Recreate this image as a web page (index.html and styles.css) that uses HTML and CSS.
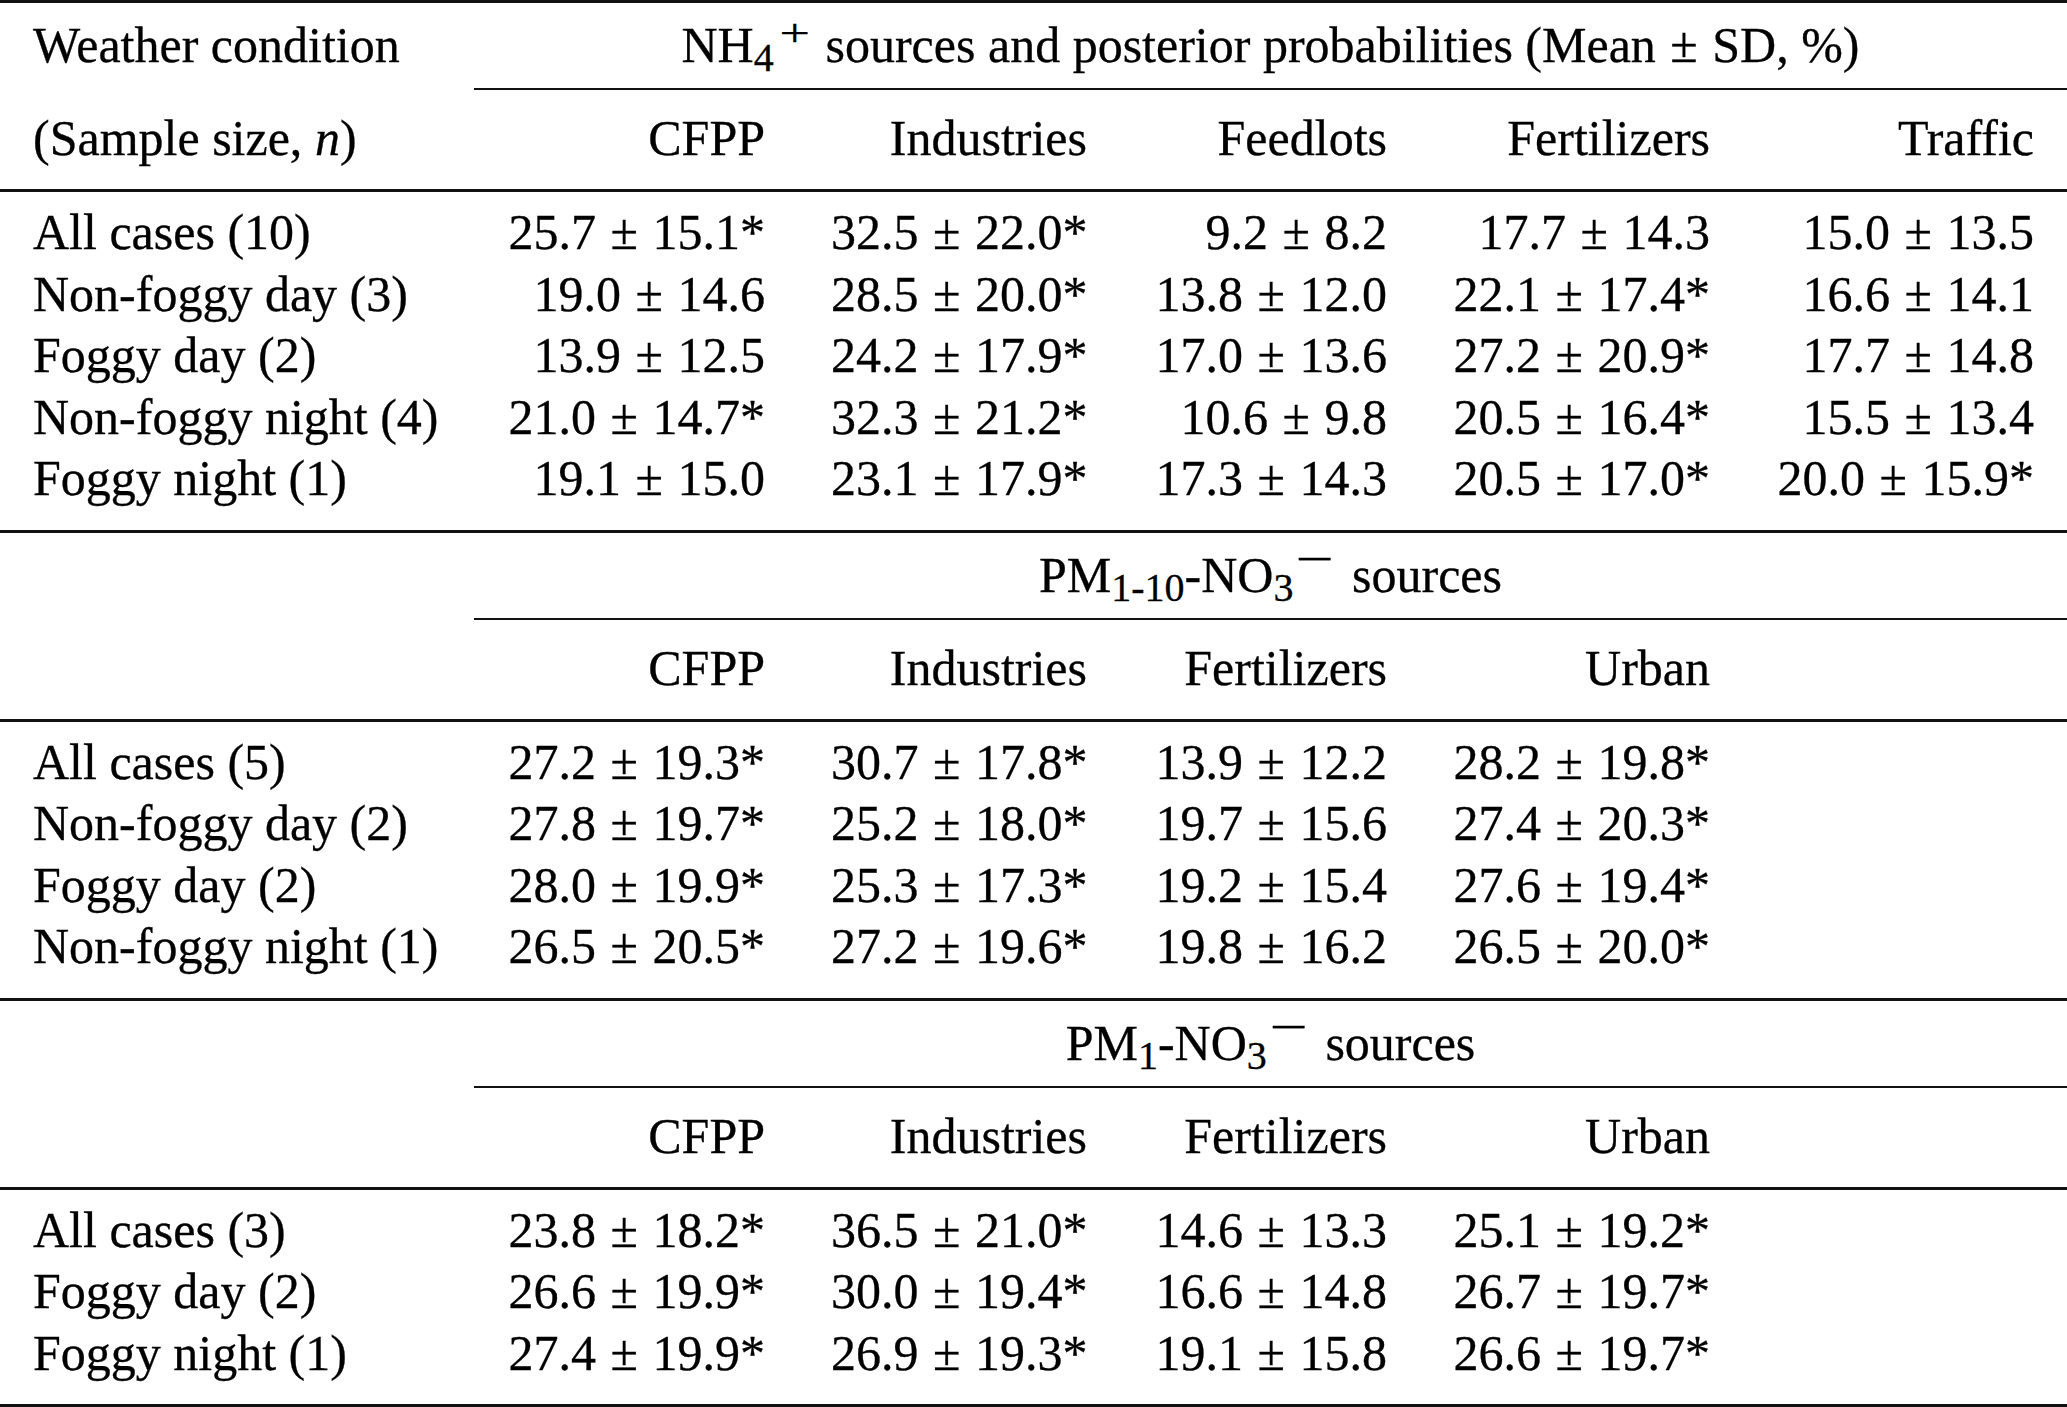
FILE: index.html
```html
<!DOCTYPE html>
<html>
<head>
<meta charset="utf-8">
<link rel="stylesheet" href="styles.css">
</head>
<body>
<table class="tbl">
  <colgroup>
    <col class="c0"><col class="c1"><col class="c2"><col class="c3"><col class="c4"><col class="c5">
  </colgroup>
  <tbody>
    <tr class="h1">
      <td class="lab">Weather condition</td>
      <td class="grp" colspan="5">NH<span class="sub">4</span><span class="sup plus">+</span> sources and posterior probabilities (Mean<span class="pm">±</span>SD, %)</td>
    </tr>
    <tr class="h2">
      <td class="lab">(Sample size, <i>n</i>)</td>
      <td>CFPP</td><td>Industries</td><td>Feedlots</td><td>Fertilizers</td><td>Traffic</td>
    </tr>
    <tr class="first">
      <td class="lab">All cases (10)</td>
      <td>25.7<span class="pm">±</span>15.1*</td><td>32.5<span class="pm">±</span>22.0*</td><td>9.2<span class="pm">±</span>8.2</td><td>17.7<span class="pm">±</span>14.3</td><td>15.0<span class="pm">±</span>13.5</td>
    </tr>
    <tr>
      <td class="lab">Non-foggy day (3)</td>
      <td>19.0<span class="pm">±</span>14.6</td><td>28.5<span class="pm">±</span>20.0*</td><td>13.8<span class="pm">±</span>12.0</td><td>22.1<span class="pm">±</span>17.4*</td><td>16.6<span class="pm">±</span>14.1</td>
    </tr>
    <tr>
      <td class="lab">Foggy day (2)</td>
      <td>13.9<span class="pm">±</span>12.5</td><td>24.2<span class="pm">±</span>17.9*</td><td>17.0<span class="pm">±</span>13.6</td><td>27.2<span class="pm">±</span>20.9*</td><td>17.7<span class="pm">±</span>14.8</td>
    </tr>
    <tr>
      <td class="lab">Non-foggy night (4)</td>
      <td>21.0<span class="pm">±</span>14.7*</td><td>32.3<span class="pm">±</span>21.2*</td><td>10.6<span class="pm">±</span>9.8</td><td>20.5<span class="pm">±</span>16.4*</td><td>15.5<span class="pm">±</span>13.4</td>
    </tr>
    <tr class="last">
      <td class="lab">Foggy night (1)</td>
      <td>19.1<span class="pm">±</span>15.0</td><td>23.1<span class="pm">±</span>17.9*</td><td>17.3<span class="pm">±</span>14.3</td><td>20.5<span class="pm">±</span>17.0*</td><td>20.0<span class="pm">±</span>15.9*</td>
    </tr>

    <tr class="h1">
      <td class="lab"></td>
      <td class="grp" colspan="5">PM<span class="sub">1-10</span>-NO<span class="sub">3</span><span class="sup minus">−</span> sources</td>
    </tr>
    <tr class="h2">
      <td class="lab"></td>
      <td>CFPP</td><td>Industries</td><td>Fertilizers</td><td>Urban</td><td></td>
    </tr>
    <tr class="first">
      <td class="lab">All cases (5)</td>
      <td>27.2<span class="pm">±</span>19.3*</td><td>30.7<span class="pm">±</span>17.8*</td><td>13.9<span class="pm">±</span>12.2</td><td>28.2<span class="pm">±</span>19.8*</td><td></td>
    </tr>
    <tr>
      <td class="lab">Non-foggy day (2)</td>
      <td>27.8<span class="pm">±</span>19.7*</td><td>25.2<span class="pm">±</span>18.0*</td><td>19.7<span class="pm">±</span>15.6</td><td>27.4<span class="pm">±</span>20.3*</td><td></td>
    </tr>
    <tr>
      <td class="lab">Foggy day (2)</td>
      <td>28.0<span class="pm">±</span>19.9*</td><td>25.3<span class="pm">±</span>17.3*</td><td>19.2<span class="pm">±</span>15.4</td><td>27.6<span class="pm">±</span>19.4*</td><td></td>
    </tr>
    <tr class="last">
      <td class="lab">Non-foggy night (1)</td>
      <td>26.5<span class="pm">±</span>20.5*</td><td>27.2<span class="pm">±</span>19.6*</td><td>19.8<span class="pm">±</span>16.2</td><td>26.5<span class="pm">±</span>20.0*</td><td></td>
    </tr>

    <tr class="h1">
      <td class="lab"></td>
      <td class="grp" colspan="5">PM<span class="sub">1</span>-NO<span class="sub">3</span><span class="sup minus">−</span> sources</td>
    </tr>
    <tr class="h2">
      <td class="lab"></td>
      <td>CFPP</td><td>Industries</td><td>Fertilizers</td><td>Urban</td><td></td>
    </tr>
    <tr class="first">
      <td class="lab">All cases (3)</td>
      <td>23.8<span class="pm">±</span>18.2*</td><td>36.5<span class="pm">±</span>21.0*</td><td>14.6<span class="pm">±</span>13.3</td><td>25.1<span class="pm">±</span>19.2*</td><td></td>
    </tr>
    <tr>
      <td class="lab">Foggy day (2)</td>
      <td>26.6<span class="pm">±</span>19.9*</td><td>30.0<span class="pm">±</span>19.4*</td><td>16.6<span class="pm">±</span>14.8</td><td>26.7<span class="pm">±</span>19.7*</td><td></td>
    </tr>
    <tr class="last end">
      <td class="lab">Foggy night (1)</td>
      <td>27.4<span class="pm">±</span>19.9*</td><td>26.9<span class="pm">±</span>19.3*</td><td>19.1<span class="pm">±</span>15.8</td><td>26.6<span class="pm">±</span>19.7*</td><td></td>
    </tr>
  </tbody>
</table>
</body>
</html>
```
FILE: styles.css
```css
html, body {
  margin: 0;
  padding: 0;
  background: #ffffff;
}

body {
  width: 2067px;
  height: 1407px;
  overflow: hidden;
  font-family: "Liberation Serif", "Times New Roman", serif;
  font-size: 50px;
  color: #000000;
  -webkit-text-stroke: 0.3px #000000;
}

.tbl {
  width: 2067px;
  table-layout: fixed;
  border-collapse: separate;
  border-spacing: 0;
}

.c0 { width: 474px; }
.c1 { width: 324px; }
.c2 { width: 322px; }
.c3 { width: 300px; }
.c4 { width: 323px; }
.c5 { width: 324px; }

.tbl td {
  padding: 0 33px;
  line-height: 61.5px;
  text-align: right;
  vertical-align: top;
  white-space: nowrap;
}

.tbl td.lab {
  text-align: left;
}

.tbl td.grp {
  text-align: center;
  padding-left: 0;
  padding-right: 0;
}

.tbl tr.h1 td {
  border-top: 3px solid #111111;
  padding-top: 12px;
  padding-bottom: 11.5px;
}

.tbl tr.h1 td.grp {
  border-bottom: 2px solid #111111;
}

.tbl tr.h2 td {
  padding-top: 18px;
  padding-bottom: 19.5px;
  border-bottom: 3px solid #111111;
}

.tbl tr.first td {
  padding-top: 10px;
}

.tbl tr.last td {
  padding-bottom: 20px;
}

.tbl tr.end td {
  border-bottom: 3px solid #111111;
}

.pm {
  margin: 0 0.29em;
}

.sub {
  font-size: 0.8em;
  line-height: 0;
  vertical-align: -9px;
}

.sup {
  display: inline-block;
  font-size: 0.9em;
  line-height: 0;
}

.sup.plus {
  vertical-align: 14.5px;
  margin-left: 0.18em;
  margin-right: 0.13em;
  transform: scale(1.2, 0.85);
}

.sup.minus {
  vertical-align: 18px;
  margin-left: 0.2em;
  margin-right: 0.26em;
  transform: scaleX(1.5);
}
```
